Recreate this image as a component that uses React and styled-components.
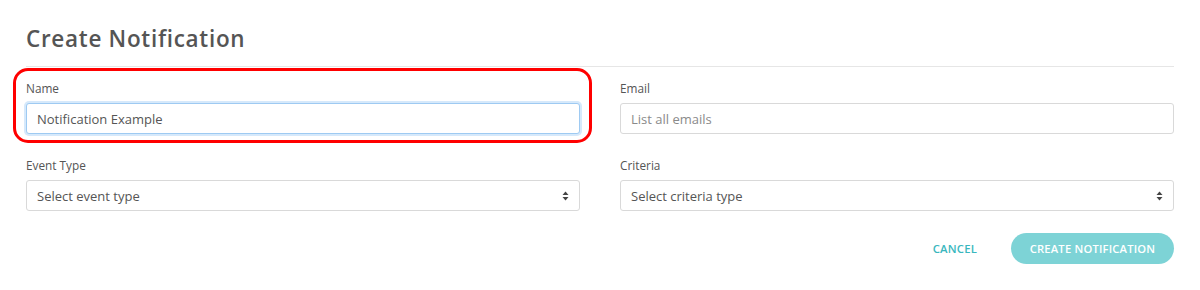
import React from "react";
import styled, { createGlobalStyle } from "styled-components";

const Global = createGlobalStyle`
  html, body { margin: 0; padding: 0; background: #fff; }
  body { font-family: "Open Sans", "Noto Sans", sans-serif; color: #555; }
  * { box-sizing: border-box; }
`;

const Page = styled.div`
  padding: 24px 26px 0;
  width: 1200px;
`;

const Title = styled.h2`
  margin: 0;
  font-family: "Open Sans", sans-serif;
  font-weight: 600;
  font-size: 22.5px;
  line-height: 30px;
  letter-spacing: 0.7px;
  color: #555;
  padding-bottom: 12px;
  border-bottom: 1px solid #e6e6e6;
`;

const Grid = styled.div`
  margin-top: 13px;
  display: grid;
  grid-template-columns: 1fr 1fr;
  column-gap: 40px;
  row-gap: 23px;
`;

const Field = styled.div`
  position: relative;
  display: flex;
  flex-direction: column;
`;

const Highlight = styled.div`
  position: absolute;
  top: -12px;
  left: -13px;
  right: -12px;
  bottom: -9px;
  border: 3.5px solid #ff0000;
  border-radius: 15px;
  pointer-events: none;
`;

const Label = styled.label`
  font-size: 11.8px;
  line-height: 16px;
  color: #555;
  margin-bottom: 7px;
`;

const Input = styled.input`
  height: 31px;
  width: 100%;
  border: 1px solid ${(p) => (p.$focused ? "#9ecaf2" : "#d9d9d9")};
  box-shadow: ${(p) => (p.$focused ? "0 0 0 2px #d6e9fb" : "none")};
  border-radius: 3px;
  padding: 0 10px;
  font-family: "Open Sans", sans-serif;
  font-size: 13px;
  color: #555;
  outline: none;
  &::placeholder { color: #8a8a8a; }
`;

const SelectBox = styled.div`
  height: 31px;
  border: 1px solid #d9d9d9;
  border-radius: 3px;
  padding: 0 10px;
  display: flex;
  align-items: center;
  justify-content: space-between;
  font-size: 13px;
  color: #555;
`;

const Arrows = () => (
  <svg width="7" height="10" viewBox="0 0 7 10">
    <path d="M3.5 0.5 L6.5 4 H0.5 Z" fill="#444" />
    <path d="M3.5 9.5 L6.5 6 H0.5 Z" fill="#444" />
  </svg>
);

const Actions = styled.div`
  margin-top: 22px;
  display: flex;
  justify-content: flex-end;
  align-items: center;
  gap: 34px;
`;

const TextButton = styled.button`
  border: none;
  background: none;
  padding: 0;
  font-family: "Open Sans", sans-serif;
  font-size: 11.3px;
  font-weight: 600;
  color: #3ab7be;
  letter-spacing: 0.2px;
  text-transform: uppercase;
`;

const PillButton = styled.button`
  height: 31px;
  width: 163px;
  border: none;
  border-radius: 16px;
  background: #7dd3d6;
  color: #fff;
  font-family: "Open Sans", sans-serif;
  font-size: 11.2px;
  font-weight: 600;
  letter-spacing: 0.2px;
  text-transform: uppercase;
`;

export default function App() {
  return (
    <>
      <Global />
      <Page>
        <Title>Create Notification</Title>
        <Grid>
          <Field>
            <Highlight />
            <Label>Name</Label>
            <Input $focused defaultValue="Notification Example" />
          </Field>
          <Field>
            <Label>Email</Label>
            <Input placeholder="List all emails" />
          </Field>
          <Field>
            <Label>Event Type</Label>
            <SelectBox>
              <span>Select event type</span>
              <Arrows />
            </SelectBox>
          </Field>
          <Field>
            <Label>Criteria</Label>
            <SelectBox>
              <span>Select criteria type</span>
              <Arrows />
            </SelectBox>
          </Field>
        </Grid>
        <Actions>
          <TextButton>Cancel</TextButton>
          <PillButton>Create Notification</PillButton>
        </Actions>
      </Page>
    </>
  );
}
